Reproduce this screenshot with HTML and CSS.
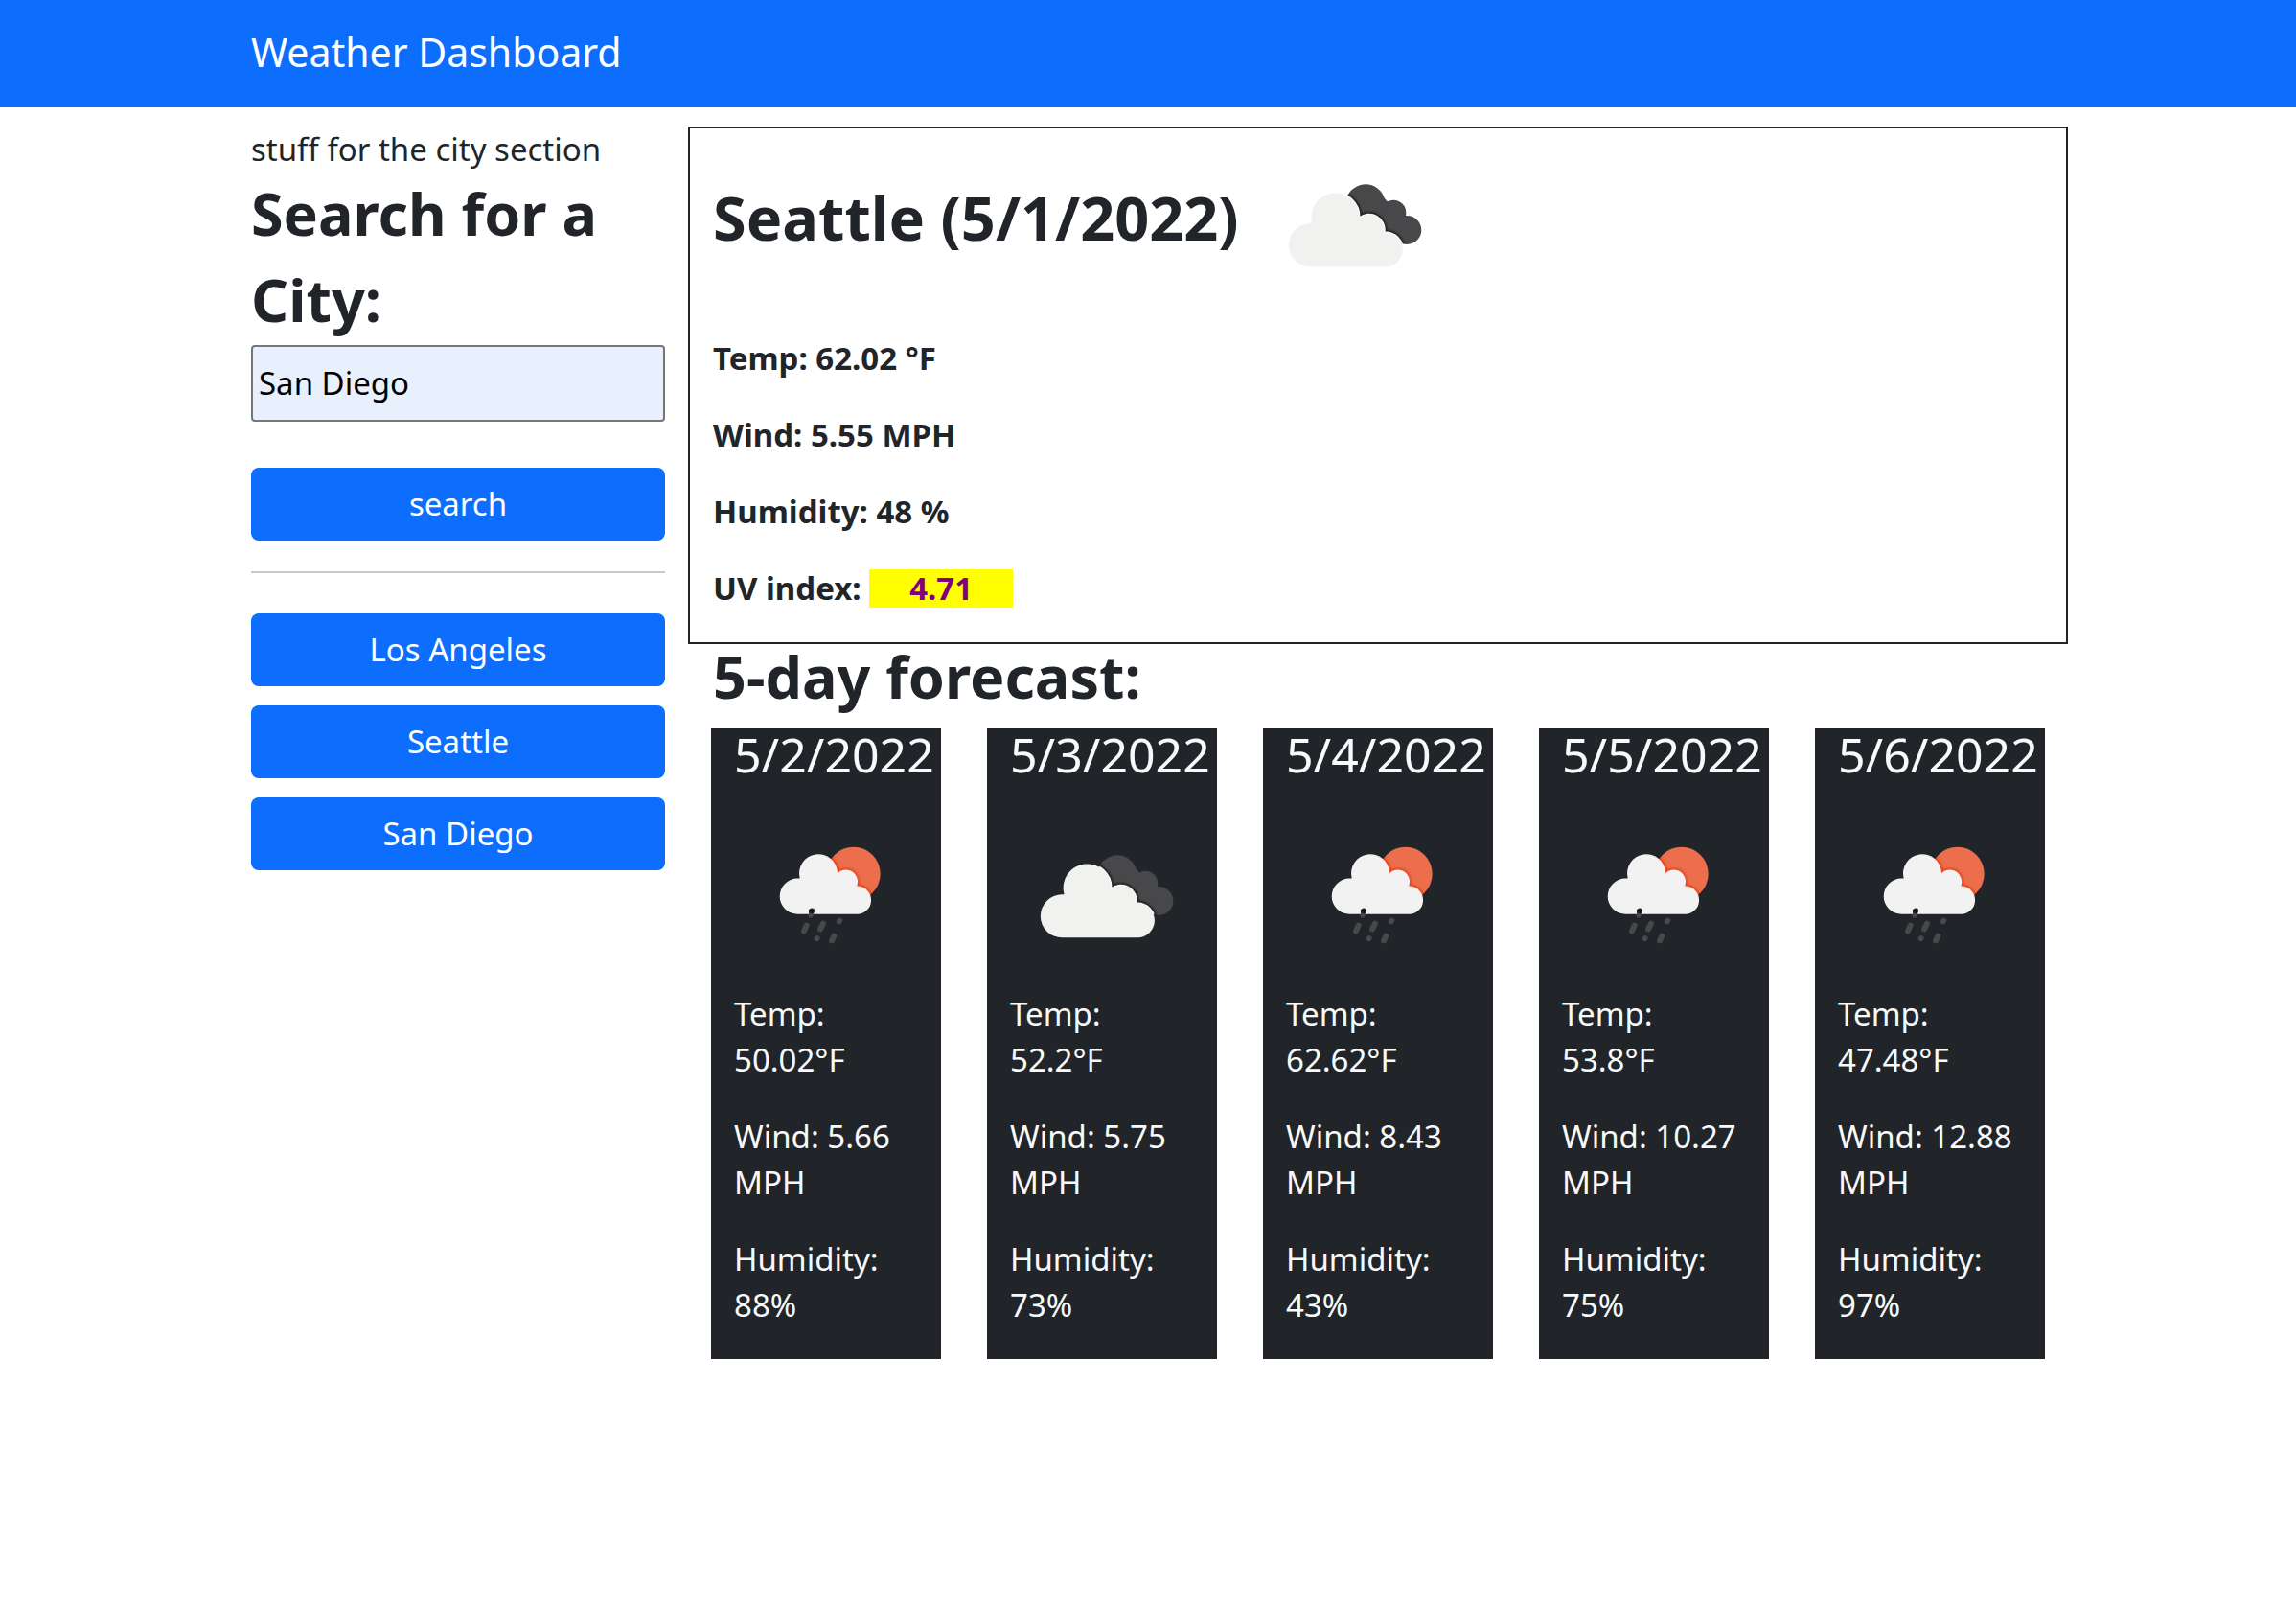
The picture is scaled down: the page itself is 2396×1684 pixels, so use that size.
FILE: index.html
```html
<!DOCTYPE html>
<html lang="en">
<head>
<meta charset="utf-8">
<meta name="viewport" content="width=device-width, initial-scale=1">
<title>Weather Dashboard</title>
<link rel="stylesheet" href="styles.css">
</head>
<body>
<svg class="sprite" aria-hidden="true">
  <defs>
    <filter id="soft" x="-10%" y="-10%" width="120%" height="120%"><feGaussianBlur stdDeviation="1.2"/></filter>
    <clipPath id="back-cloud">
      <circle cx="112" cy="79" r="20.7"/><circle cx="141" cy="88" r="13.3"/><circle cx="155.3" cy="106" r="15"/>
      <path d="M98 80 L125 66 L150 92 L150 120 L112 105Z"/>
    </clipPath>
    <clipPath id="sun-disc"><circle cx="124.7" cy="77.7" r="28"/></clipPath>
    <path id="front-cloud" d="M54.3 144.3A22.5 22.5 0 0 1 54.3 99.3L56.5 99.3A25 25 0 1 1 105.5 93.5A16 16 0 0 1 131.5 108.5L133 108.5A17.9 17.9 0 0 1 133 144.3Z"/>
    <path id="rain-cloud" d="M66.3 119.7A18.5 18.5 0 0 1 66.3 82.5L68.7 82.5A20 20 0 1 1 108 77A12.5 12.5 0 0 1 128.3 90.6L129.7 90.6A14.6 14.6 0 0 1 129.7 119.7Z"/>
    <symbol id="cloudy" viewBox="0 0 200 200">
      <g clip-path="url(#back-cloud)">
        <rect width="200" height="200" fill="#48484a"/>
        <use href="#front-cloud" fill="none" stroke="#111" stroke-width="5" opacity=".8" filter="url(#soft)"/>
        <use href="#front-cloud" fill="none" stroke="#fff" stroke-width="2"/>
      </g>
      <use href="#front-cloud" fill="#f1f1ef"/>
    </symbol>
    <symbol id="rainy" viewBox="0 0 200 200">
      <g clip-path="url(#sun-disc)">
        <rect width="200" height="200" fill="#ec6e4c"/>
        <use href="#rain-cloud" fill="none" stroke="#e8461c" stroke-width="4" filter="url(#soft)"/>
      </g>
      <use href="#rain-cloud" fill="#f2f2f2"/>
      <path d="M81.5 116L80 121" stroke="#48484a" stroke-width="5" stroke-linecap="round"/>
      <circle cx="80.7" cy="116.5" r="2.8" fill="#1c1c1e"/>
      <path d="M75.7 131.5L73 137.5M93 129.5L90 135.5M110.3 126.5L109.7 127.5M86.7 145L86.6 145.2M104.5 142.5L102 147.5" stroke="#48484a" stroke-width="5.8" stroke-linecap="round"/>
    </symbol>
  </defs>
</svg>

<header class="navbar">
  <div class="container"><span class="brand">Weather Dashboard</span></div>
</header>

<main class="container layout">
  <aside class="cities">
    <p class="note">stuff for the city section</p>
    <form class="search">
      <label class="heading" for="city">Search for a City:</label>
      <input id="city" type="text" value="San Diego">
      <button class="btn" type="button">search</button>
    </form>
    <hr>
    <div class="history">
      <button class="btn" type="button">Los Angeles</button>
      <button class="btn" type="button">Seattle</button>
      <button class="btn" type="button">San Diego</button>
    </div>
  </aside>

  <div class="weather">
    <section class="current">
      <div class="current-head">
        <h1 class="heading">Seattle (5/1/2022)</h1>
        <svg class="icon" role="img" aria-label="Cloudy"><use href="#cloudy"/></svg>
      </div>
      <p>Temp: 62.02 °F</p>
      <p>Wind: 5.55 MPH</p>
      <p>Humidity: 48 %</p>
      <p>UV index: <span class="uv">4.71</span></p>
    </section>

    <section class="forecast">
      <h2 class="heading">5-day forecast:</h2>
      <div class="days">
        <article class="day">
          <h3>5/2/2022</h3>
          <svg class="icon" role="img" aria-label="Rain"><use href="#rainy"/></svg>
          <p>Temp: 50.02°F</p><p>Wind: 5.66 MPH</p><p>Humidity: 88%</p>
        </article>
        <article class="day">
          <h3>5/3/2022</h3>
          <svg class="icon" role="img" aria-label="Cloudy"><use href="#cloudy"/></svg>
          <p>Temp: 52.2°F</p><p>Wind: 5.75 MPH</p><p>Humidity: 73%</p>
        </article>
        <article class="day">
          <h3>5/4/2022</h3>
          <svg class="icon" role="img" aria-label="Rain"><use href="#rainy"/></svg>
          <p>Temp: 62.62°F</p><p>Wind: 8.43 MPH</p><p>Humidity: 43%</p>
        </article>
        <article class="day">
          <h3>5/5/2022</h3>
          <svg class="icon" role="img" aria-label="Rain"><use href="#rainy"/></svg>
          <p>Temp: 53.8°F</p><p>Wind: 10.27 MPH</p><p>Humidity: 75%</p>
        </article>
        <article class="day">
          <h3>5/6/2022</h3>
          <svg class="icon" role="img" aria-label="Rain"><use href="#rainy"/></svg>
          <p>Temp: 47.48°F</p><p>Wind: 12.88 MPH</p><p>Humidity: 97%</p>
        </article>
      </div>
    </section>
  </div>
</main>
</body>
</html>
```
FILE: styles.css
```css
*,
*::before,
*::after {
  box-sizing: border-box;
}

body {
  margin: 0;
  background: #fff;
  color: #212529;
  font: 400 33px/48px "Noto Sans", "Open Sans", sans-serif;
}

h1, h2, h3, p {
  margin: 0;
}

.sprite {
  position: absolute;
  width: 0;
  height: 0;
}

.container {
  max-width: 1920px;
  margin: 0 auto;
}

.navbar {
  background: #0d6efd;
  color: #fff;
  padding: 24px 0 28px;
}

.brand {
  display: block;
  padding-left: 24px;
  font-size: 41px;
  line-height: 60px;
}

.layout {
  display: grid;
  grid-template-columns: 1fr 3fr;
  padding-top: 20px;
}

.cities {
  padding: 0 24px;
}

.heading {
  display: block;
  font-size: 61px;
  font-weight: 700;
  line-height: 90px;
}

.search {
  display: flex;
  flex-direction: column;
}

.search .heading {
  margin: -2px 0 2px;
}

.search input {
  height: 80px;
  width: 100%;
  margin-bottom: 48px;
  padding: 0 6px 2px;
  border: 2px solid #767676;
  border-radius: 4px;
  background: #e8f0fe;
  color: #000;
  font: inherit;
}

.btn {
  width: 100%;
  padding: 14px 24px;
  border: 0;
  border-radius: 8px;
  background: #0d6efd;
  color: #fff;
  font: inherit;
  cursor: pointer;
}

hr {
  height: 2px;
  margin: 32px 0 42px;
  border: 0;
  background: #c8c9ca;
}

.history {
  display: grid;
  gap: 20px;
}

.current {
  padding: 0 24px;
  border: 2px solid #212529;
  font-weight: 700;
}

.current-head {
  display: flex;
  gap: 20px;
  margin-bottom: 16px;
}

.current-head .heading {
  padding-top: 48px;
  font-size: 63px;
}

.current p,
.day p {
  margin-bottom: 32px;
}

.icon {
  display: block;
  flex: none;
  width: 200px;
  height: 200px;
}

.uv {
  display: inline-block;
  padding: 0 42px;
  background: #ff0;
  color: #800080;
  line-height: 40px;
}

.forecast {
  padding: 0 24px;
}

.forecast > .heading {
  margin-bottom: 20px;
  padding-left: 2px;
  line-height: 68px;
}

.days {
  display: grid;
  grid-template-columns: repeat(5, 1fr);
  gap: 48px;
}

.day {
  min-width: 0;
  padding: 0 24px;
  background: #212529;
  color: #f8f9fa;
}

.day h3 {
  margin-bottom: 20px;
  font-size: 50px;
  font-weight: 400;
  line-height: 54px;
  white-space: nowrap;
}
```
